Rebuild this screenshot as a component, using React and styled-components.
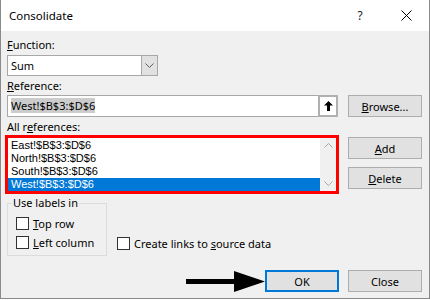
import React from "react";
import styled, { createGlobalStyle } from "styled-components";

const GlobalStyle = createGlobalStyle`
  body {
    margin: 0;
    background: #fff;
  }
`;

const refs = ["East!$B$3:$D$6", "North!$B$3:$D$6", "South!$B$3:$D$6", "West!$B$3:$D$6"];

function Chevron({ down, color = "#606060" }) {
  return (
    <svg width="9" height="5" viewBox="0 0 9 5">
      <polyline
        points={down ? "0.5,0.5 4.5,4.5 8.5,0.5" : "0.5,4.5 4.5,0.5 8.5,4.5"}
        fill="none"
        stroke={color}
        strokeWidth="1"
      />
    </svg>
  );
}

function App() {
  return (
    <>
      <GlobalStyle />
      <Window>
        <TitleBar>
          <Title>Consolidate</Title>
          <TitleButton>?</TitleButton>
          <TitleButton>
            <svg width="11" height="11" viewBox="0 0 11 11">
              <path d="M0.5 0.5 L10.5 10.5 M10.5 0.5 L0.5 10.5" stroke="#000" strokeWidth="1" />
            </svg>
          </TitleButton>
        </TitleBar>
        <Body>
          <Label>
            <u>F</u>unction:
          </Label>
          <Combo>
            <ComboValue>Sum</ComboValue>
            <ComboButton>
              <Chevron down />
            </ComboButton>
          </Combo>
          <Label $top={2}>
            <u>R</u>eference:
          </Label>
          <Grid $top={1}>
            <RefField>
              <RefText>
                <Selected>West!$B$3:$D$6</Selected>
              </RefText>
              <CollapseButton>
                <svg width="9" height="10" viewBox="0 0 9 10">
                  <path d="M4.5 0 L9 4.5 L6 4.5 L6 10 L3 10 L3 4.5 L0 4.5 Z" fill="#000" />
                </svg>
              </CollapseButton>
            </RefField>
            <Button>
              <u>B</u>rowse...
            </Button>
          </Grid>
          <Label $top={2}>
            All r<u>e</u>ferences:
          </Label>
          <Grid>
            <Highlight>
              <ListBox>
                <Items>
                  {refs.map((r, i) => (
                    <Item key={r} $selected={i === refs.length - 1}>
                      {r}
                    </Item>
                  ))}
                </Items>
                <ScrollBar>
                  <Chevron color="#a6a6a6" />
                  <Chevron down color="#a6a6a6" />
                </ScrollBar>
              </ListBox>
            </Highlight>
            <ButtonStack>
              <Button>
                <u>A</u>dd
              </Button>
              <Button>
                <u>D</u>elete
              </Button>
            </ButtonStack>
          </Grid>
          <Options>
            <Group>
              <Legend>Use labels in</Legend>
              <CheckRow $indent={4}>
                <Box />
                <span>
                  <u>T</u>op row
                </span>
              </CheckRow>
              <CheckRow $indent={4}>
                <Box />
                <span>
                  <u>L</u>eft column
                </span>
              </CheckRow>
            </Group>
            <CheckRow $bottom={3}>
              <Box />
              <span>
                Create links to <u>s</u>ource data
              </span>
            </CheckRow>
          </Options>
          <Footer>
            <svg width="79" height="21" viewBox="0 0 79 21">
              <rect x="0" y="8" width="49" height="5" fill="#000" />
              <polygon points="48,0 79,10.5 48,21" fill="#000" />
            </svg>
            <Button $primary>OK</Button>
            <Button>Close</Button>
          </Footer>
        </Body>
      </Window>
    </>
  );
}

export default App;

const Window = styled.div`
  width: 430px;
  height: 299px;
  box-sizing: border-box;
  border: 1px solid #8a8a8a;
  border-top: none;
  background: #f0f0f0;
  display: flex;
  flex-direction: column;
  font-family: "Segoe UI", "Noto Sans", sans-serif;
  font-size: 11px;
  color: #000;
`;

const TitleBar = styled.div`
  height: 31px;
  flex-shrink: 0;
  background: #fff;
  display: flex;
  align-items: center;
  padding-left: 8px;
`;

const Title = styled.div`
  flex: 1;
  font-size: 11.5px;
`;

const TitleButton = styled.div`
  width: 46px;
  height: 31px;
  display: flex;
  align-items: center;
  justify-content: center;
  font-size: 12px;
  color: #222;
`;

const Body = styled.div`
  padding: 6px 7px 0 6px;
`;

const Label = styled.div`
  line-height: 16px;
  height: 16px;
  margin-top: ${(p) => p.$top || 0}px;
`;

const Combo = styled.div`
  margin-top: 2px;
  width: 151px;
  height: 21px;
  display: flex;
`;

const ComboValue = styled.div`
  flex: 1;
  background: #fff;
  border: 1px solid #a8a8a8;
  border-right: none;
  padding-left: 3px;
  line-height: 19px;
`;

const ComboButton = styled.div`
  width: 15px;
  background: #e1e1e1;
  border: 1px solid #a8a8a8;
  display: flex;
  align-items: center;
  justify-content: center;
`;

const Grid = styled.div`
  display: grid;
  grid-template-columns: 332px 74px;
  column-gap: 9px;
  align-items: start;
  margin-top: ${(p) => p.$top || 0}px;
`;

const RefField = styled.div`
  width: 331px;
  height: 22px;
  box-sizing: border-box;
  border: 1px solid #a8a8a8;
  background: #fff;
  display: flex;
`;

const RefText = styled.div`
  flex: 1;
  padding-left: 3px;
  line-height: 19px;
`;

const Selected = styled.span`
  background: #cccccc;
`;

const CollapseButton = styled.div`
  width: 20px;
  box-sizing: border-box;
  border: 2px solid #b0b0b0;
  margin: -1px -1px -1px 0;
  height: 22px;
  background: #fff;
  display: flex;
  align-items: center;
  justify-content: center;
`;

const Button = styled.div`
  width: 74px;
  height: 22px;
  box-sizing: border-box;
  background: #e1e1e1;
  border: ${(p) => (p.$primary ? "2px solid #0078d7" : "1px solid #adadad")};
  display: flex;
  align-items: center;
  justify-content: center;
  margin-right: ${(p) => (p.$primary ? 9 : 0)}px;
`;

const Highlight = styled.div`
  margin-left: -2px;
  width: 334px;
  box-sizing: border-box;
  border: 3px solid #ff0000;
`;

const ListBox = styled.div`
  display: flex;
  background: #fff;
  padding-top: 1px;
`;

const Items = styled.div`
  flex: 1;
  font-family: "Liberation Sans", Arial, sans-serif;
  font-size: 11px;
`;

const Item = styled.div`
  height: 13px;
  line-height: 13px;
  padding-left: 3px;
  background: ${(p) => (p.$selected ? "#0078d7" : "transparent")};
  color: ${(p) => (p.$selected ? "#fff" : "#000")};
`;

const ScrollBar = styled.div`
  width: 16px;
  margin-top: -1px;
  background: #f0f0f0;
  display: flex;
  flex-direction: column;
  justify-content: space-between;
  align-items: center;
  padding: 5px 0;
  box-sizing: border-box;
`;

const ButtonStack = styled.div`
  display: flex;
  flex-direction: column;
  gap: 8px;
  margin-top: 2px;
`;

const Options = styled.div`
  display: flex;
  align-items: flex-end;
  gap: 10px;
  margin-top: 1px;
`;

const Group = styled.fieldset`
  margin: 0;
  width: 100px;
  box-sizing: border-box;
  min-width: 0;
  border: 1px solid #dcdcdc;
  padding: 3px 0 3px 4px;
`;

const Legend = styled.legend`
  padding: 0 1px;
  line-height: 16px;
`;

const CheckRow = styled.div`
  display: flex;
  align-items: center;
  gap: 4px;
  height: 19px;
  white-space: nowrap;
  padding-left: ${(p) => p.$indent || 0}px;
  margin-bottom: ${(p) => p.$bottom || 0}px;
`;

const Box = styled.div`
  width: 13px;
  height: 13px;
  box-sizing: border-box;
  border: 1px solid #333;
  background: #fff;
  flex-shrink: 0;
`;

const Footer = styled.div`
  display: flex;
  justify-content: flex-end;
  align-items: center;
  margin-top: 14px;
`;
